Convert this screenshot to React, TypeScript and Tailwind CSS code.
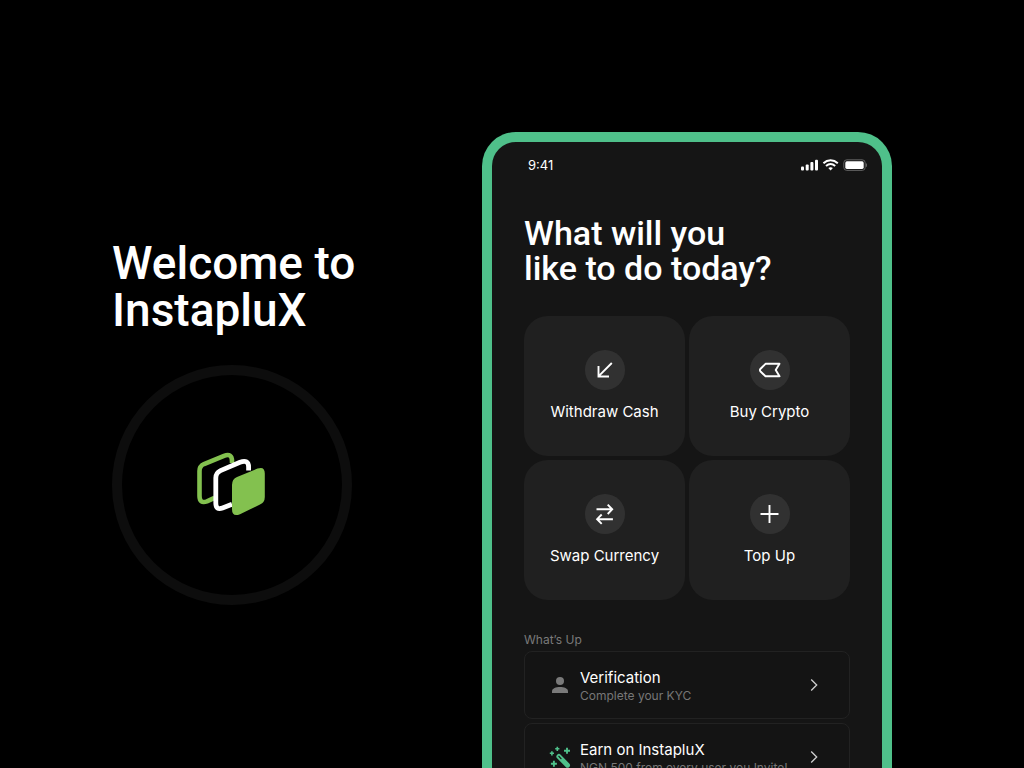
import type { ReactNode } from "react";

function Logo() {
  return (
    <svg viewBox="2 0 100 100" className="size-[100px]" fill="none" aria-label="InstapluX logo" role="img">
      <path
        d="M34.5 62.8 L27 66.3 Q19.5 69 19.5 61 V36 Q19.5 31 24 29 L44 20.8 Q52 17.8 52 26 V28"
        stroke="#83c14f"
        strokeWidth="4.6"
      />
      <path
        d="M52 69.3 L42.5 73 Q35.8 75.5 35.8 68 V43 Q35.8 37.8 40.5 35.6 L60 27.2 Q68.6 24 68.6 32 V35.5"
        stroke="#fff"
        strokeWidth="4.8"
      />
      <path
        d="M52 50 Q52 44.2 57 42 L77.5 33.6 Q84.8 31 84.8 38.5 V62 Q84.8 67.5 80 69.5 L60 79.2 Q52 82.5 52 74 Z"
        fill="#83c14f"
      />
    </svg>
  );
}

function StatusBar() {
  return (
    <div className="flex items-center justify-between pl-9 pr-[15px] pt-[13px]">
      <span className="text-[13px] leading-5">9:41</span>
      <svg viewBox="0 0 67 12" className="h-3 w-[67px]" fill="#fff" aria-hidden="true">
        <rect x="1" y="7.5" width="3" height="4" rx="1" />
        <rect x="5.7" y="5.5" width="3" height="6" rx="1" />
        <rect x="10.4" y="3" width="3" height="8.5" rx="1" />
        <rect x="15" y="0.8" width="3" height="10.7" rx="1" />
        <g fill="none" stroke="#fff" strokeWidth="2">
          <path d="M23.4 4.2 C27.6 .4 33.6 .4 37.8 4.2" />
          <path d="M26 7 C28.8 4.6 32.4 4.6 35.2 7" />
        </g>
        <path d="M28.3 9.1 Q30.6 7.2 32.9 9.1 L30.6 11.5 Z" />
        <rect x="43.8" y="0.8" width="21.4" height="10.6" rx="3" fill="none" stroke="#626262" />
        <rect x="45.3" y="2.3" width="18.4" height="7.6" rx="1.6" />
        <path d="M66 4.2 Q67.4 4.8 67.4 6 Q67.4 7.4 66 8 Z" fill="#626262" />
      </svg>
    </div>
  );
}

function Glyph({ children }: { children: ReactNode }) {
  return (
    <svg viewBox="0 0 40 40" className="size-10 rounded-full bg-[#313131]" fill="none" stroke="#fff" strokeWidth="1.9" aria-hidden="true">
      {children}
    </svg>
  );
}

const actions = [
  { label: "Withdraw Cash", icon: <path d="M26.8 13 L13.7 26.2 M13.5 16 V26.5 H24" /> },
  {
    label: "Buy Crypto",
    icon: <path d="M15.5 13.8 H29.5 L25.7 20 L29.5 26.3 H15.5 L10.3 21.2 Q9.5 20.1 10.3 19 Z" strokeLinejoin="round" />,
  },
  {
    label: "Swap Currency",
    icon: <path d="M11.5 15.3 H27 M22.7 10.6 L27.2 15.3 L22.7 20 M27.9 25.2 H12.3 M16.7 20.5 L12.1 25.2 L16.7 29.9" />,
  },
  { label: "Top Up", icon: <path d="M19.5 11 V29 M10.5 20 H28.5" /> },
];

function PersonIcon() {
  return (
    <svg viewBox="0 0 24 24" className="size-6" fill="#7a7a7a" aria-hidden="true">
      <circle cx="12" cy="8" r="4" />
      <path d="M4 20 V18.2 C4 15.4 8 14 12 14 C16 14 20 15.4 20 18.2 V20 Z" />
    </svg>
  );
}

function WandIcon() {
  return (
    <svg viewBox="0 0 24 24" className="size-6" fill="none" stroke="#4fc08a" strokeWidth="1.9" aria-hidden="true">
      <path d="M10.9 11.5 L19.5 20.2" strokeWidth="5" strokeLinecap="round" />
      <path d="M10.9 11.4 L13 13.6" stroke="#151515" strokeWidth="1.3" strokeLinecap="round" />
      <path d="M19 2.8 V8.8 M16 5.8 H22 M5.9 15.8 V21.8 M2.9 18.8 H8.9" />
      <path d="M9.3 1.7 V5.9 M7.2 3.8 H11.4 M3.9 6.2 V10.4 M1.8 8.3 H6" strokeWidth="1.6" />
    </svg>
  );
}

const updates = [
  { title: "Verification", detail: "Complete your KYC", icon: <PersonIcon /> },
  { title: "Earn on InstapluX", detail: "NGN 500 from every user you Invite!", icon: <WandIcon /> },
];

export default function App() {
  return (
    <main className="flex h-screen items-start justify-between gap-8 overflow-hidden bg-black pl-28 pr-[132px] font-['Inter',sans-serif] text-white">
      <section className="shrink-0 pt-60">
        <h1 className="font-['Roboto',sans-serif] text-[46px] font-medium leading-[47px]">
          Welcome to
          <br />
          InstapluX
        </h1>
        <div className="mt-[31px] flex size-60 items-center justify-center rounded-full border-10 border-[#0d0d0d]">
          <Logo />
        </div>
      </section>

      <section className="mt-[132px] w-full max-w-[410px] rounded-t-[34px] border-10 border-b-0 border-[#4fc08a] bg-[#151515]">
        <StatusBar />
        <div className="px-8 pb-8 pt-[41px]">
          <h2 className="font-['Roboto',sans-serif] text-[34px] font-medium leading-[35px]">
            What will you
            <br />
            like to do today?
          </h2>

          <div className="mt-[30px] grid grid-cols-2 gap-1">
            {actions.map((action) => (
              <button
                key={action.label}
                type="button"
                className="flex h-35 flex-col items-center justify-center gap-3 rounded-3xl bg-[#202020] text-[15px] leading-5"
              >
                <Glyph>{action.icon}</Glyph>
                {action.label}
              </button>
            ))}
          </div>

          <h3 className="mt-8 text-xs leading-4 text-[#7a7a7a]">What’s Up</h3>
          <div className="mt-[3px] flex flex-col gap-1">
            {updates.map((update) => (
              <a
                key={update.title}
                href="#"
                className="flex h-17 items-center rounded-lg border border-[#222222] bg-[#141414] pl-[23px] pr-[23px]"
              >
                {update.icon}
                <span className="ml-2 flex flex-1 flex-col whitespace-nowrap pt-0.5">
                  <span className="text-[15px] leading-5">{update.title}</span>
                  <span className="text-xs leading-4 text-[#777777]">{update.detail}</span>
                </span>
                <svg viewBox="0 0 24 24" className="size-6" fill="none" stroke="#d0d0d0" strokeWidth="1.3" aria-hidden="true">
                  <path d="M9.2 6.5 L14.7 12 L9.2 17.5" />
                </svg>
              </a>
            ))}
          </div>
        </div>
      </section>
    </main>
  );
}
